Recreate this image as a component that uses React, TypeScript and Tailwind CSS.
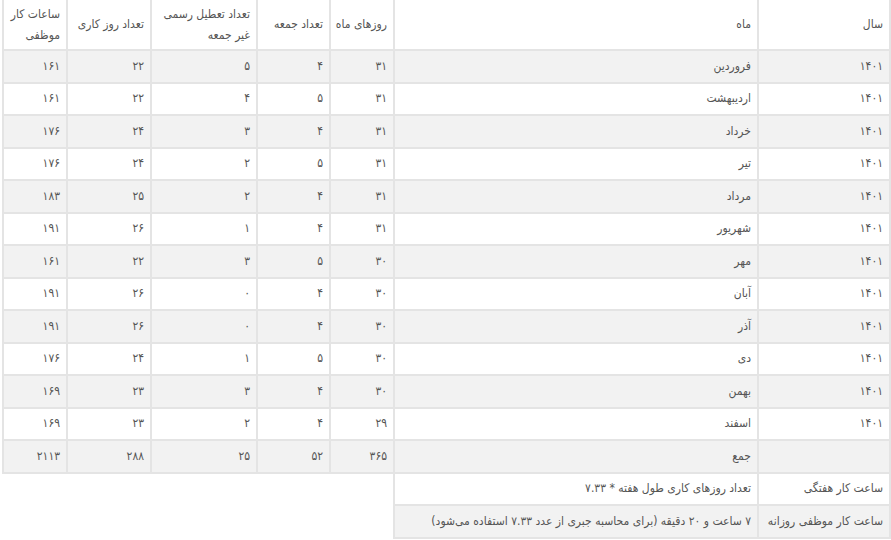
const rows = [
  ['۱۴۰۱', 'فروردین', '۳۱', '۴', '۵', '۲۲', '۱۶۱'],
  ['۱۴۰۱', 'اردیبهشت', '۳۱', '۵', '۴', '۲۲', '۱۶۱'],
  ['۱۴۰۱', 'خرداد', '۳۱', '۴', '۳', '۲۴', '۱۷۶'],
  ['۱۴۰۱', 'تیر', '۳۱', '۵', '۲', '۲۴', '۱۷۶'],
  ['۱۴۰۱', 'مرداد', '۳۱', '۴', '۲', '۲۵', '۱۸۳'],
  ['۱۴۰۱', 'شهریور', '۳۱', '۴', '۱', '۲۶', '۱۹۱'],
  ['۱۴۰۱', 'مهر', '۳۰', '۵', '۳', '۲۲', '۱۶۱'],
  ['۱۴۰۱', 'آبان', '۳۰', '۴', '۰', '۲۶', '۱۹۱'],
  ['۱۴۰۱', 'آذر', '۳۰', '۴', '۰', '۲۶', '۱۹۱'],
  ['۱۴۰۱', 'دی', '۳۰', '۵', '۱', '۲۴', '۱۷۶'],
  ['۱۴۰۱', 'بهمن', '۳۰', '۴', '۳', '۲۳', '۱۶۹'],
  ['۱۴۰۱', 'اسفند', '۲۹', '۴', '۲', '۲۳', '۱۶۹'],
  ['', 'جمع', '۳۶۵', '۵۲', '۲۵', '۲۸۸', '۲۱۱۳'],
];

const notes = [
  ['ساعت کار هفتگی', 'تعداد روزهای کاری طول هفته * ۷.۳۳'],
  ['ساعت کار موظفی روزانه', '۷ ساعت و ۲۰ دقیقه (برای محاسبه جبری از عدد ۷.۳۳ استفاده می‌شود)'],
];

const cell = 'border-2 border-[#e4e4e4] pr-[6px] pl-[4px] py-0 align-middle text-right';

const App = () => {
  return (
    <div
      className="min-h-screen bg-white pl-[2px] pr-[1px]"
      style={{ fontFamily: '"DejaVu Sans Condensed", "DejaVu Sans", Tahoma, sans-serif' }}
    >
      <table dir="rtl" className="w-full table-fixed border-collapse text-[12px] leading-[21px] text-[#555]">
        <colgroup>
          <col className="w-[132px]" />
          <col className="w-[364px]" />
          <col className="w-[64px]" />
          <col className="w-[73px]" />
          <col className="w-[106px]" />
          <col className="w-[84px]" />
          <col className="w-[64px]" />
        </colgroup>
        <thead>
          <tr className="h-[50px] bg-white">
            <th className={`${cell} border-t-0 font-normal`}>سال</th>
            <th className={`${cell} border-t-0 font-normal`}>ماه</th>
            <th className={`${cell} border-t-0 font-normal`}>روزهای ماه</th>
            <th className={`${cell} border-t-0 font-normal`}>تعداد جمعه</th>
            <th className={`${cell} border-t-0 font-normal`}>تعداد تعطیل رسمی غیر جمعه</th>
            <th className={`${cell} border-t-0 font-normal`}>تعداد روز کاری</th>
            <th className={`${cell} border-t-0 font-normal`}>ساعات کار موظفی</th>
          </tr>
        </thead>
        <tbody>
          {rows.map((r, i) => (
            <tr key={i} className={i % 2 === 0 ? 'h-[32.5px] bg-[#f2f2f2]' : 'h-[32.5px] bg-white'}>
              {r.map((v, j) => (
                <td key={j} className={cell}>{v}</td>
              ))}
            </tr>
          ))}
          {notes.map((n, i) => (
            <tr key={'n' + i} className="h-[32.5px]">
              <td className={i % 2 === 0 ? `${cell} bg-white` : `${cell} bg-[#f2f2f2]`}>{n[0]}</td>
              <td className={i % 2 === 0 ? `${cell} bg-white` : `${cell} bg-[#f2f2f2]`}>{n[1]}</td>
            </tr>
          ))}
        </tbody>
      </table>
    </div>
  );
};

export default App;
